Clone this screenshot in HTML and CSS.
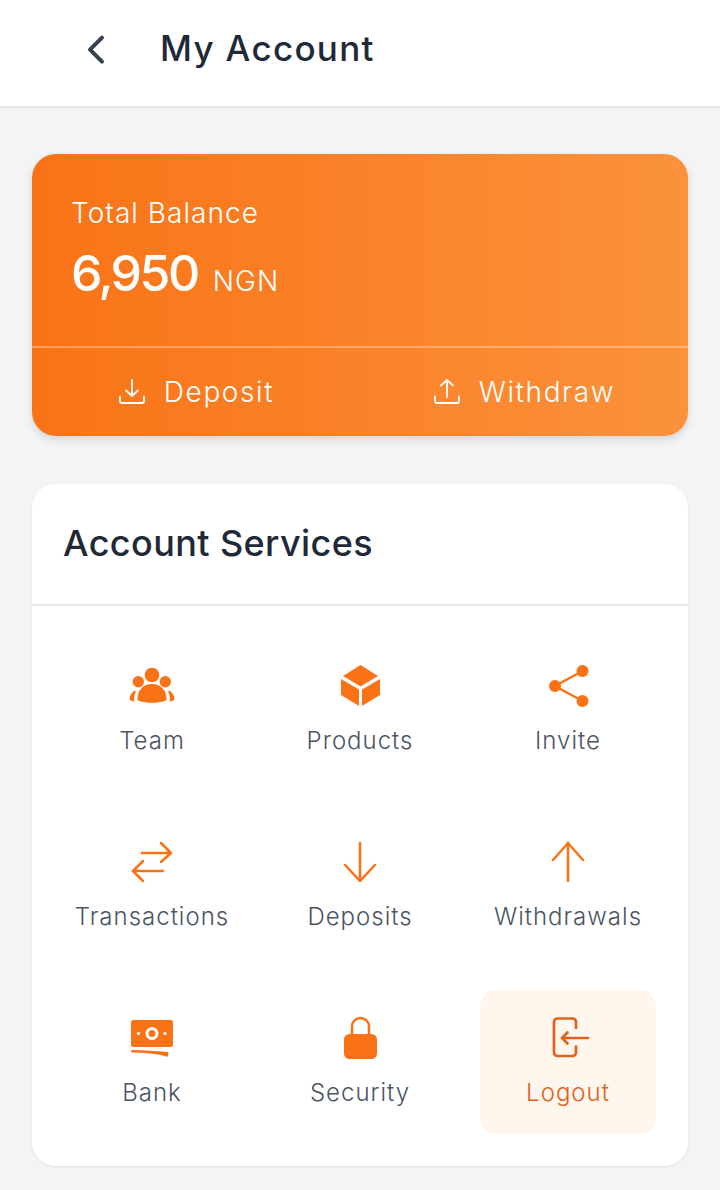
FILE: index.html
```html
<!DOCTYPE html>
<html lang="en">
<head>
    <meta charset="UTF-8">
    <meta name="viewport" content="width=device-width, initial-scale=1.0">
    <title>My Account</title>
    <link rel="stylesheet" href="styles.css">
</head>
<body>
    <div class="header">
        <svg class="back-icon" viewBox="0 0 24 24" fill="none" stroke="#374151" stroke-width="3" stroke-linecap="round" stroke-linejoin="round"><path d="M16.500 3.500 7.500 12.500l9 9"/></svg>
        <h1>My Account</h1>
    </div>

    <div class="content">
        <div class="balance-card">
            <div class="balance-top">
                <div class="balance-label">Total Balance</div>
                <div class="balance-row">
                    <span class="balance-amount">6,950</span>
                    <span class="balance-currency">NGN</span>
                </div>
            </div>
            <div class="balance-actions">
                <div class="balance-action">
                    <svg viewBox="0 0 28 28" fill="none" stroke="#fff" stroke-width="1.800" stroke-linecap="round" stroke-linejoin="round"><path d="M14 2v16M8 12.500 14 18l6-5.500M2 18.500V23a2 2 0 0 0 2 2h20a2 2 0 0 0 2-2v-4.500"/></svg>
                    <span>Deposit</span>
                </div>
                <div class="balance-action">
                    <svg viewBox="0 0 28 28" fill="none" stroke="#fff" stroke-width="1.800" stroke-linecap="round" stroke-linejoin="round"><path d="M14 19V2M8 7.500 14 2l6 5.500M2 18.500V23a2 2 0 0 0 2 2h20a2 2 0 0 0 2-2v-4.500"/></svg>
                    <span>Withdraw</span>
                </div>
            </div>
        </div>

        <div class="services-card">
            <h2 class="services-title">Account Services</h2>
            <div class="services-grid">
                <div class="service">
                    <svg viewBox="0 0 48 48" fill="#f97316"><circle cx="24" cy="13" r="7.300"/><circle cx="10.300" cy="19.700" r="5.700"/><circle cx="37.300" cy="19.700" r="5.700"/><path d="M9.500 37c0-9 6-15 14.500-15s14.500 6 14.500 15c0 1-.5 1.500-1.500 2-4 1.200-8.500 1.800-13 1.800s-9-.6-13-1.800c-1-.5-1.500-1-1.500-2z"/><path d="M6.500 28.500c-3 2.500-5 5.500-5 8.500 0 1 1.500 1.800 4.500 2.700C6 35.500 6.500 32 8 29.500z"/><path d="M41.500 28.500c3 2.500 5 5.500 5 8.500 0 1-1.500 1.800-4.500 2.700 0-4.200-.5-7.700-2-10.200z"/></svg>
                    <span>Team</span>
                </div>
                <div class="service">
                    <svg viewBox="0 0 48 48" fill="#f97316"><path d="M24.500 3 42 14 24.500 24.500 7 14z"/><path d="M5 17 23 27.500V44L5 33z"/><path d="M44 17 26 27.500V44l18-11z"/></svg>
                    <span>Products</span>
                </div>
                <div class="service">
                    <svg viewBox="0 0 48 48" fill="#f97316" stroke="#f97316"><circle cx="38.500" cy="9" r="6" stroke="none"/><circle cx="11" cy="24" r="6" stroke="none"/><circle cx="38.500" cy="39" r="6" stroke="none"/><path d="M38.500 9 11 24l27.500 15" fill="none" stroke-width="2.500"/></svg>
                    <span>Invite</span>
                </div>
                <div class="service">
                    <svg viewBox="0 0 48 48" fill="none" stroke="#f97316" stroke-width="2.500" stroke-linecap="round" stroke-linejoin="round"><path d="M14 15h29M33 5l10 10-10 9M35 33H5M15 23 5 33l10 10"/></svg>
                    <span>Transactions</span>
                </div>
                <div class="service">
                    <svg viewBox="0 0 48 48" fill="none" stroke="#f97316" stroke-width="2.500" stroke-linecap="round" stroke-linejoin="round"><path d="M24 5v38M9 27l15 16 15-16"/></svg>
                    <span>Deposits</span>
                </div>
                <div class="service">
                    <svg viewBox="0 0 48 48" fill="none" stroke="#f97316" stroke-width="2.500" stroke-linecap="round" stroke-linejoin="round"><path d="M24 43V5M9 22 24 5l15 17"/></svg>
                    <span>Withdrawals</span>
                </div>
                <div class="service">
                    <svg viewBox="0 0 48 48"><rect x="3" y="6" width="42" height="27" rx="2.500" fill="#f97316"/><circle cx="24" cy="19.500" r="5" fill="none" stroke="#fff" stroke-width="3"/><circle cx="10.500" cy="19.500" r="1.600" fill="#fff"/><circle cx="37" cy="19.500" r="1.600" fill="#fff"/><path d="M4.500 36C15 36 28 37 39 38c1.500 0 1.500 0 1.300 1.500l-.3 2c-.2 1-.6 1.500-2 1-10-3-22-4-33.500-4-2 0-2-2.500 0-2.500z" fill="#f97316"/></svg>
                    <span>Bank</span>
                </div>
                <div class="service">
                    <svg viewBox="0 0 48 48" fill="none"><path d="M16 22v-9.500a8.500 8.500 0 0 1 17 0V22" stroke="#f97316" stroke-width="2.500"/><rect x="8" y="20" width="33" height="25" rx="5.500" fill="#f97316"/></svg>
                    <span>Security</span>
                </div>
                <div class="service logout">
                    <svg viewBox="0 0 48 48" fill="none" stroke="#e2611c" stroke-width="2.700" stroke-linecap="round" stroke-linejoin="round"><path d="M32 14v-6a3.500 3.500 0 0 0-3.500-3.500H13.500A3.500 3.500 0 0 0 10 8v30.500a3.500 3.500 0 0 0 3.500 3.500h15a3.500 3.500 0 0 0 3.500-3.500v-6"/><path d="M44 24H18M23.500 18.500 18 24l5.500 5.500"/></svg>
                    <span>Logout</span>
                </div>
            </div>
        </div>
    </div>
</body>
</html>
```

FILE: styles.css
```css
* {
    box-sizing: border-box;
}
body {
    font-family: Inter, "Noto Sans", sans-serif;
    margin: 0;
    background: #f3f4f6;
    color: #1f2937;
}
.header {
    height: 106px;
    background: white;
    box-shadow: 0 1px 3px rgba(0,0,0,0.1);
    display: flex;
    align-items: center;
    padding: 0 80px 8px 80px;
    gap: 32px;
}
.back-icon {
    width: 32px;
    height: 32px;
    flex-shrink: 0;
}
.header h1 {
    margin: 0 0 2px;
    font-size: 35px;
    font-weight: 500;
    color: #1f2937;
    letter-spacing: 1.300px;
    padding-left: 16px;
}
.content {
    padding: 48px 32px 24px;
    display: flex;
    flex-direction: column;
    gap: 48px;
}
.balance-card {
    height: 282px;
    border-radius: 24px;
    background: linear-gradient(to right, #f97316, #fb923c);
    box-shadow: 0 4px 8px rgba(0,0,0,0.12);
    color: white;
    display: flex;
    flex-direction: column;
}
.balance-top {
    height: 194px;
    padding: 40px 39px 0;
    border-bottom: 2px solid rgba(255,255,255,0.3);
}
.balance-label {
    font-size: 28px;
    font-weight: 300;
    line-height: 38px;
    letter-spacing: 1.050px;
}
.balance-row {
    margin-top: 8px;
    display: flex;
    align-items: baseline;
    gap: 15px;
}
.balance-amount {
    font-size: 50px;
    font-weight: 500;
    letter-spacing: -2.500px;
    line-height: 66px;
}
.balance-currency {
    font-size: 28px;
    font-weight: 300;
    letter-spacing: 1px;
}
.balance-actions {
    flex: 1;
    display: grid;
    grid-template-columns: 1fr 1fr;
}
.balance-action {
    display: flex;
    align-items: center;
    justify-content: center;
    gap: 18px;
    font-size: 28px;
    font-weight: 300;
    letter-spacing: 1.600px;
}
.balance-action svg {
    width: 28px;
    height: 28px;
}
.services-card {
    background: white;
    border-radius: 24px;
    box-shadow: 0 1px 3px rgba(0,0,0,0.08);
}
.services-title {
    margin: 0;
    height: 122px;
    padding: 0 31px 2px;
    display: flex;
    align-items: center;
    font-size: 36px;
    font-weight: 500;
    letter-spacing: 0.400px;
    color: #1f2937;
    border-bottom: 2px solid #e5e7eb;
}
.services-grid {
    padding: 32px;
    display: grid;
    grid-template-columns: repeat(3, 1fr);
    grid-auto-rows: 144px;
    gap: 32px;
}
.service {
    border-radius: 16px;
    display: flex;
    flex-direction: column;
    align-items: center;
    padding-top: 24px;
    gap: 16px;
    font-size: 24px;
    font-weight: 300;
    letter-spacing: 1px;
    color: #4b5563;
    white-space: nowrap;
}
.service svg {
    width: 48px;
    height: 48px;
    flex-shrink: 0;
}
.service.logout {
    background: #fff7ed;
    color: #e2611c;
}
```
